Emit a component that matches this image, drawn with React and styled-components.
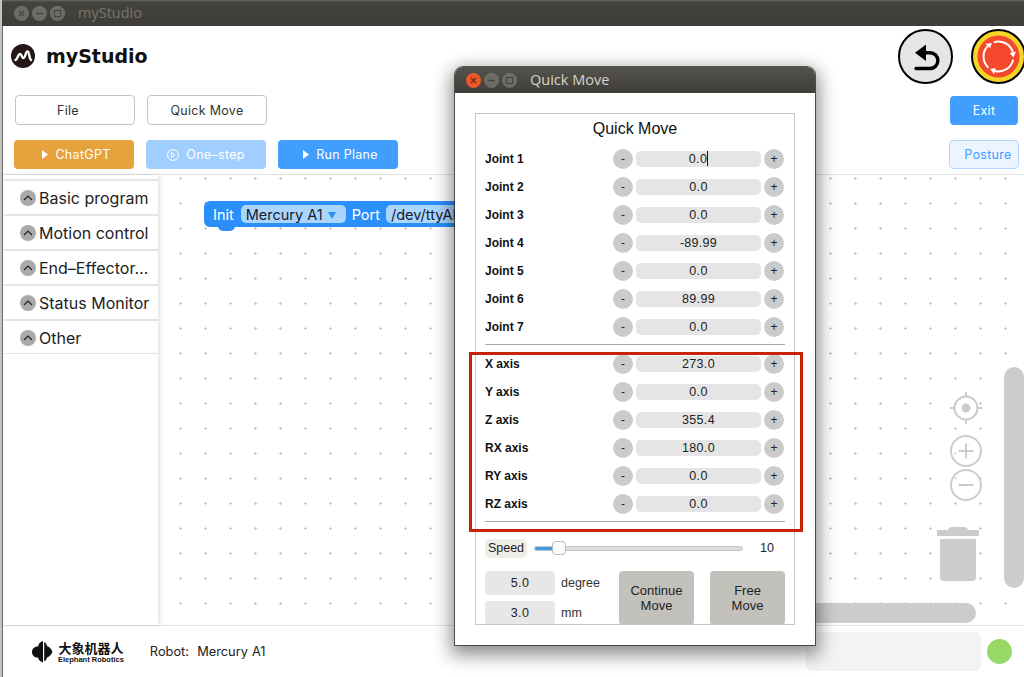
import React from 'react'
import styled, { createGlobalStyle } from 'styled-components'

const Global = createGlobalStyle`
  html, body { margin: 0; padding: 0; background: #fff; }
  body { font-family: "Noto Sans", "Liberation Sans", sans-serif; overflow: hidden; }
  * { box-sizing: border-box; }
`

const uiFont = `Inter, "Noto Sans CJK SC", sans-serif`
const formFont = `"Liberation Sans", Arial, sans-serif`

const Page = styled.div`
  position: relative;
  width: 1024px;
  height: 677px;
  overflow: hidden;
  display: flex;
  flex-direction: column;
  background: #fff;
  border-left: 2px solid #c4c4c4;
`

// sliver of the desktop and the window behind, seen along the left edge
const DesktopEdge = styled.div`
  position: absolute;
  left: -2px;
  top: 26px;
  bottom: 0;
  width: 3px;
  border-right: 1px solid #6a6a6a;
  z-index: 2;
  background: linear-gradient(
    #bdbdbd 342px, #333 342px, #333 355px, #bdbdbd 355px,
    #bdbdbd 390px, #333 390px, #333 408px, #bdbdbd 408px,
    #bdbdbd 436px, #333 436px, #333 444px, #bdbdbd 444px,
    #bdbdbd 454px, #333 454px, #333 461px, #bdbdbd 461px,
    #bdbdbd 472px, #333 472px, #333 479px, #bdbdbd 479px
  );
`

const TitleBar = styled.div`
  height: 26px;
  flex: none;
  margin-left: -2px;
  display: flex;
  align-items: center;
  gap: 3px;
  padding-left: 14px;
  background: linear-gradient(#6a6862, #45433e 2px, #3f3d38);
`

const WinDot = styled.span`
  width: 15px;
  height: 15px;
  border-radius: 50%;
  display: inline-flex;
  align-items: center;
  justify-content: center;
  background: ${p => p.$bg || '#6d6b65'};
  color: ${p => p.$fg || '#45433e'};
  box-shadow: inset 0 1px 1px rgba(255, 255, 255, .08);
  flex: none;
`

const TitleText = styled.span`
  margin-left: ${p => p.$gap}px;
  margin-top: -1px;
  font: 14.5px "Open Sans", sans-serif;
  color: ${p => p.$active ? '#d8d4c8' : '#77756d'};
`

const Header = styled.div`
  height: 149px;
  flex: none;
  display: flex;
  justify-content: space-between;
  border-bottom: 1px solid #e2e2e2;
  padding: 18px 0 5px 12px;
`

const LeftHead = styled.div`
  display: flex;
  flex-direction: column;
`

const Brand = styled.div`
  display: flex;
  align-items: center;
  gap: 11px;
  height: 24px;
  font: bold 19px "DejaVu Sans", sans-serif;
  color: #111;
  margin-left: -3px;
`

const ButtonRow = styled.div`
  display: flex;
  gap: 12px;
  margin-top: ${p => p.$top}px;
  margin-left: ${p => p.$left || 0}px;
`

const Btn = styled.div`
  flex: none;
  width: ${p => p.$w || 120}px;
  height: ${p => p.$h || 29}px;
  margin-top: ${p => p.$mt || 0}px;
  margin-right: ${p => p.$mr || 0}px;
  padding: 0 ${p => p.$pr || 0}px 0 ${p => p.$pl || 0}px;
  border-radius: 4px;
  display: flex;
  align-items: center;
  justify-content: center;
  gap: 7px;
  font: 12.5px ${uiFont};
  letter-spacing: .3px;
  color: ${p => p.$fg || '#fff'};
  background: ${p => p.$bg || '#fff'};
  border: 1px solid ${p => p.$line || 'transparent'};
`

const RightHead = styled.div`
  display: flex;
  flex-direction: column;
  align-items: flex-end;
  padding-right: 5px;
`

const RoundRow = styled.div`
  display: flex;
  gap: 18px;
  margin-top: -15px;
  margin-right: -7px;
  flex: none;
`

const RoundBtn = styled.div`
  width: 55px;
  height: 55px;
  border-radius: 50%;
  border: 2px solid #000;
  background: ${p => p.$bg};
  display: flex;
  align-items: center;
  justify-content: center;
  flex: none;
`

const Main = styled.div`
  position: relative;
  flex: 1;
  min-height: 0;
  display: flex;
`

const Sidebar = styled.div`
  width: 156px;
  flex: none;
  padding: 4px 0 0 2px;
  background: #fff;
  box-shadow: 2px 0 4px rgba(0, 0, 0, .12);
  z-index: 1;
`

const Category = styled.div`
  height: 35px;
  display: flex;
  align-items: center;
  gap: 3px;
  padding-left: 16px;
  border-top: 2px solid #e4e4e4;
  font: 16px ${uiFont};
  color: #222;
  white-space: nowrap;
  &:last-child { border-bottom: 1px solid #e4e4e4; padding-top: 1px; }
`

const Chevron = styled.span`
  width: 16px;
  height: 16px;
  border-radius: 50%;
  background: #aaa;
  display: flex;
  align-items: center;
  justify-content: center;
  flex: none;
`

const Canvas = styled.div`
  position: relative;
  flex: 1;
  overflow: hidden;
`

const Dots = styled.svg`
  position: absolute;
  inset: 0;
  width: 100%;
  height: 100%;
`

const Block = styled.div`
  position: absolute;
  left: 46px;
  top: 26px;
  width: 300px;
  height: 26px;
  border-radius: 6px 0 0 6px;
  background: #2b8ffb;
  display: flex;
  align-items: center;
  gap: 6px;
  padding-left: 9px;
  font: 14.5px ${uiFont};
  color: #fff;
  white-space: nowrap;
  &::after {
    content: '';
    position: absolute;
    left: 14px;
    bottom: -4px;
    width: 17px;
    height: 5px;
    border-radius: 0 0 8px 8px;
    background: #2b8ffb;
  }
`

const Field = styled.span`
  height: 18px;
  margin-left: ${p => p.$ml || 0}px;
  padding: 0 ${p => p.$pr || 5}px 0 5px;
  border-radius: 5px;
  background: #aad5fd;
  color: #14202c;
  display: flex;
  align-items: center;
  gap: 5px;
`

const Caret = styled.span`
  width: 0;
  height: 0;
  margin-top: 2px;
  border-left: 4.5px solid transparent;
  border-right: 4.5px solid transparent;
  border-top: 7px solid #2b8ffb;
`

const CanvasIcon = styled.svg`
  position: absolute;
  left: ${p => p.$x}px;
  top: ${p => p.$y}px;
`

const VScroll = styled.div`
  position: absolute;
  right: 0;
  top: 192px;
  width: 20px;
  height: 221px;
  border-radius: 10px;
  background: #ccc;
`

const HScroll = styled.div`
  position: absolute;
  left: 400px;
  right: 48px;
  bottom: 2px;
  height: 20px;
  border-radius: 10px;
  background: #ccc;
`

const Footer = styled.div`
  height: 52px;
  flex: none;
  border-top: 1px solid #e2e2e2;
  display: flex;
  align-items: center;
  padding-left: 29px;
`

const Logo = styled.div`
  display: flex;
  align-items: center;
  gap: 5px;
`

const LogoText = styled.div`
  display: flex;
  flex-direction: column;
  align-items: center;
  color: #111;
`

const LogoCn = styled.span`
  font: bold 13px/15px "Noto Sans CJK SC", sans-serif;
`

const LogoEn = styled.span`
  font: bold 7.5px/9px "Liberation Sans", sans-serif;
`

const RobotText = styled.span`
  margin-left: 26px;
  font: 12.8px ${uiFont};
  color: #222;
  word-spacing: .5px;
`

const Status = styled.div`
  margin-left: auto;
  display: flex;
  align-items: center;
  gap: 6px;
  padding-right: 12px;
`

const StatusBox = styled.div`
  width: 175px;
  height: 39px;
  border-radius: 6px;
  background: #f3f3f3;
`

const Led = styled.span`
  width: 25px;
  height: 25px;
  border-radius: 50%;
  background: #98d866;
`

const Dialog = styled.div`
  position: absolute;
  left: 453px;
  top: 67px;
  width: 360px;
  height: 578px;
  background: #fff;
  border-radius: 8px 8px 0 0;
  box-shadow: 0 0 0 1px rgba(40, 40, 40, .75), 0 6px 18px 4px rgba(0, 0, 0, .45);
  display: flex;
  flex-direction: column;
  z-index: 3;
`

const DialogBar = styled.div`
  height: 26px;
  flex: none;
  display: flex;
  align-items: center;
  gap: 3px;
  padding-left: 11px;
  border-radius: 8px 8px 0 0;
  background: linear-gradient(#55534d, #3f3d38);
`

const Panel = styled.div`
  margin: 20px 0 0 20px;
  width: 320px;
  height: 512px;
  border: 1px solid #c6c6c6;
  display: flex;
  flex-direction: column;
  padding: 0 9px;
  overflow: hidden;
  font-family: ${formFont};
`

const PanelTitle = styled.div`
  height: 31px;
  flex: none;
  text-align: center;
  font-size: 16px;
  line-height: 29px;
  color: #111;
`

const AxisRow = styled.div`
  height: 28px;
  flex: none;
  display: flex;
  align-items: center;
  padding-right: 1px;
`

const AxisLabel = styled.span`
  flex: 1;
  font-size: 12px;
  font-weight: bold;
  color: #111;
`

const StepBtn = styled.span`
  width: 20px;
  height: 20px;
  border-radius: 50%;
  background: #cbcbcb;
  font-size: 12px;
  display: flex;
  align-items: center;
  justify-content: center;
  color: #222;
  flex: none;
`

const AxisInput = styled.div`
  position: relative;
  width: 125px;
  height: 16px;
  margin: 0 3px;
  border-radius: 5px;
  background: #e5e5e5;
  font-size: 12.5px;
  line-height: 16px;
  text-align: center;
  letter-spacing: .3px;
  color: #222;
`

const Cursor = styled.span`
  display: inline-block;
  width: 1px;
  height: 15px;
  vertical-align: -3px;
  background: #111;
`

const Rule = styled.div`
  height: 1px;
  flex: none;
  background: #aaa;
  margin: ${p => p.$m};
`

const SpeedRow = styled.div`
  height: 20px;
  flex: none;
  margin-top: 16px;
  display: flex;
  align-items: center;
  font-size: 12.5px;
  color: #222;
`

const SpeedTag = styled.span`
  width: 42px;
  height: 19px;
  border-radius: 5px;
  background: #efeee6;
  display: flex;
  align-items: center;
  justify-content: center;
`

const Track = styled.div`
  position: relative;
  width: 209px;
  height: 5px;
  margin-left: 7px;
  border-radius: 3px;
  background: #dcdcdc;
  border: 1px solid #c4c4c4;
`

const TrackFill = styled.div`
  height: 100%;
  border-radius: 3px 0 0 3px;
  background: #3d9be0;
`

const Thumb = styled.span`
  position: absolute;
  top: -6px;
  left: ${p => p.$left}px;
  width: 14px;
  height: 14px;
  border-radius: 4px;
  background: #fafafa;
  border: 1px solid #bbb;
`

const SpeedValue = styled.span`
  margin-left: 17px;
`

const Bottom = styled.div`
  flex: none;
  margin-top: 13px;
  display: flex;
`

const StepCol = styled.div`
  width: 134px;
  display: flex;
  flex-direction: column;
  gap: 6px;
`

const StepRow = styled.div`
  display: flex;
  align-items: center;
  gap: 6px;
  font-size: 12.5px;
  color: #333;
`

const StepInput = styled.span`
  width: 70px;
  height: 24px;
  border-radius: 4px;
  background: #e7e7e7;
  display: flex;
  align-items: center;
  justify-content: center;
  letter-spacing: .3px;
  color: #222;
`

const MoveBtn = styled.div`
  width: 75px;
  height: 54px;
  margin-right: ${p => p.$mr || 0}px;
  border-radius: 4px;
  background: #c2c1bb;
  display: flex;
  align-items: center;
  justify-content: center;
  text-align: center;
  font-size: 13px;
  line-height: 15px;
  color: #222;
`

const Annotation = styled.div`
  position: absolute;
  left: 467px;
  top: 352px;
  width: 334px;
  height: 180px;
  border: 3px solid #c8240c;
  z-index: 4;
`

const joints = [
  ['Joint 1', '0.0'], ['Joint 2', '0.0'], ['Joint 3', '0.0'], ['Joint 4', '-89.99'],
  ['Joint 5', '0.0'], ['Joint 6', '89.99'], ['Joint 7', '0.0'],
]
const axes = [
  ['X axis', '273.0'], ['Y axis', '0.0'], ['Z axis', '355.4'],
  ['RX axis', '180.0'], ['RY axis', '0.0'], ['RZ axis', '0.0'],
]
const categories = ['Basic program', 'Motion control', 'End\u2013Effector\u2026', 'Status Monitor', 'Other']

// three clockwise arrows of the reset button, heads 120 degrees apart
const polar = (deg, r) => {
  const a = deg * Math.PI / 180
  return [23.5 + r * Math.cos(a), 23.5 + r * Math.sin(a)]
}
const resetArrows = [-16, 104, 224].map(end => {
  const [sx, sy] = polar(end - 92, 15)
  const [ex, ey] = polar(end, 15)
  const [ox, oy] = polar(end, 18.2)
  const [ix, iy] = polar(end, 11.8)
  const [tx, ty] = polar(end + 20, 15)
  return {
    arc: `M${sx} ${sy}A15 15 0 0 1 ${ex} ${ey}`,
    head: `M${ox} ${oy}L${ix} ${iy}L${tx} ${ty}z`,
  }
})

const Tri = () => (
  <svg width="6" height="9" viewBox="0 0 6 9"><path d="M0 0l6 4.5L0 9z" fill="#fff" /></svg>
)

const WindowDots = ({ active }) => (
  <>
    <WinDot $bg={active ? '#e9572b' : '#6d6b65'} $fg={active ? '#7a2a10' : '#45433e'}>
      <svg width="7" height="7" viewBox="0 0 7 7"><path d="M1 1l5 5M6 1L1 6" stroke="currentColor" strokeWidth="1.2" /></svg>
    </WinDot>
    <WinDot>
      <svg width="7" height="7" viewBox="0 0 7 7"><path d="M0 3.5h7" stroke="currentColor" strokeWidth="1.4" /></svg>
    </WinDot>
    <WinDot>
      <svg width="7" height="7" viewBox="0 0 7 7"><rect x=".5" y=".5" width="6" height="6" fill="none" stroke="currentColor" /></svg>
    </WinDot>
  </>
)

const Axis = ({ label, value, cursor }) => (
  <AxisRow>
    <AxisLabel>{label}</AxisLabel>
    <StepBtn>-</StepBtn>
    <AxisInput>{value}{cursor && <Cursor />}</AxisInput>
    <StepBtn>+</StepBtn>
  </AxisRow>
)

export default function App() {
  return (
    <Page>
      <Global />
      <DesktopEdge />
      <TitleBar>
        <WindowDots />
        <TitleText $gap={10}>myStudio</TitleText>
      </TitleBar>
      <Header>
        <LeftHead>
          <Brand>
            <svg width="24" height="24" viewBox="0 0 24 24">
              <circle cx="12" cy="12" r="12" fill="#231815" />
              <path d="M4.5 16c2-.5 2.5-6 4.5-6s1.5 4 3.5 4 2-6.5 4-6.5 1.5 7 3.5 8.5" fill="none" stroke="#fff" strokeWidth="2.4" strokeLinecap="round" />
            </svg>
            myStudio
          </Brand>
          <ButtonRow $top={27} $left={1}>
            <Btn $h={30} $line="#c4c4c4" $fg="#333" $pr={14}>File</Btn>
            <Btn $h={30} $line="#c4c4c4" $fg="#333">Quick Move</Btn>
          </ButtonRow>
          <ButtonRow $top={15}>
            <Btn $bg="#e6a23c" $pl={5}><Tri /> ChatGPT</Btn>
            <Btn $bg="#a0cfff">
              <svg width="12" height="12" viewBox="0 0 12 12"><circle cx="6" cy="6" r="5.4" fill="none" stroke="#fff" /><path d="M4.5 3.5l3.5 2.5-3.5 2.5z" fill="none" stroke="#fff" /></svg>
              One&ndash;step
            </Btn>
            <Btn $bg="#409eff" $pl={5}><Tri /> Run Plane</Btn>
          </ButtonRow>
        </LeftHead>
        <RightHead>
          <RoundRow>
            <RoundBtn $bg="#e6e6e6">
              <svg width="30" height="30" viewBox="0 0 30 30">
                <path d="M15 10.7h4a7.9 7.9 0 0 1 0 15.8H5" fill="none" stroke="#000" strokeWidth="3.4" strokeLinecap="round" />
                <path d="M4 10.7L15 2.5v16.5z" fill="#000" />
              </svg>
            </RoundBtn>
            <RoundBtn $bg="#f5d327">
              <svg width="47" height="47" viewBox="0 0 47 47">
                <circle cx="23.5" cy="23.5" r="21" fill="#f4492c" />
                {resetArrows.map(a => (
                  <g key={a.arc}>
                    <path d={a.arc} fill="none" stroke="#fff" strokeWidth="2" />
                    <path d={a.head} fill="#fff" />
                  </g>
                ))}
              </svg>
            </RoundBtn>
          </RoundRow>
          <Btn $bg="#409eff" $w={68} $mt={12} $mr={1}>Exit</Btn>
          <Btn $bg="#ecf5ff" $fg="#409eff" $line="#b3d8ff" $w={70} $mt={15} $pl={8}>Posture</Btn>
        </RightHead>
      </Header>
      <Main>
        <Sidebar>
          {categories.map(c => (
            <Category key={c}>
              <Chevron>
                <svg width="10" height="6" viewBox="0 0 10 6"><path d="M1 5l4-4 4 4" fill="none" stroke="#222" strokeWidth="1.2" /></svg>
              </Chevron>
              {c}
            </Category>
          ))}
        </Sidebar>
        <Canvas>
          <Dots>
            <defs>
              <pattern id="grid" x="20" y="1" width="25" height="25" patternUnits="userSpaceOnUse">
                <path d="M2.5 1v3M1 2.5h3" stroke="#c8c8c8" strokeWidth="1" />
              </pattern>
            </defs>
            <rect width="100%" height="100%" fill="url(#grid)" />
          </Dots>
          <Block>
            Init
            <Field $ml={1} $pr={10}>Mercury A1 <Caret /></Field>
            Port
            <Field>/dev/ttyAMA1</Field>
          </Block>
          <CanvasIcon $x={791} $y={216} width="34" height="34" viewBox="0 0 34 34">
            <circle cx="17" cy="17" r="11.5" fill="none" stroke="#ccc" strokeWidth="2" />
            <circle cx="17" cy="17" r="4.5" fill="#ccc" />
            <path d="M17 1v5M17 28v5M1 17h5M28 17h5" stroke="#ccc" strokeWidth="2" />
          </CanvasIcon>
          <CanvasIcon $x={791} $y={259} width="34" height="34" viewBox="0 0 34 34">
            <circle cx="17" cy="17" r="15" fill="#fff" fillOpacity=".4" stroke="#ccc" strokeWidth="2" />
            <path d="M17 9.5v15M9.5 17h15" stroke="#ccc" strokeWidth="2" />
          </CanvasIcon>
          <CanvasIcon $x={791} $y={293} width="34" height="34" viewBox="0 0 34 34">
            <circle cx="17" cy="17" r="15" fill="#fff" fillOpacity=".4" stroke="#ccc" strokeWidth="2" />
            <path d="M9.5 17h15" stroke="#ccc" strokeWidth="2" />
          </CanvasIcon>
          <CanvasIcon $x={779} $y={352} width="42" height="54" viewBox="0 0 42 54">
            <path d="M0 3h42v6H0zM11 3c1-3 3-3 5-3h10c2 0 4 0 5 3z" fill="#ccc" />
            <path d="M3 12h36v38a4 4 0 0 1-4 4H7a4 4 0 0 1-4-4z" fill="#ccc" />
          </CanvasIcon>
          <VScroll />
          <HScroll />
        </Canvas>
      </Main>
      <Footer>
        <Logo>
          <svg width="22" height="22" viewBox="0 0 22 22">
            <path d="M12 0v21.5c-2.5-.5-4.5-2.5-5-5-3 .5-6-2-6-5.500s3-6 6-5.500C7.500 2.500 9.500.5 12 0zM13.200 1c1.500 1 2.800 2.500 2.800 4 2 .5 4.500 3 5.500 6-1 2.500-3.500 5-5.500 5.500 0 1.500-1.300 3-2.800 4z" fill="#111" />
          </svg>
          <LogoText>
            <LogoCn>大象机器人</LogoCn>
            <LogoEn>Elephant Robotics</LogoEn>
          </LogoText>
        </Logo>
        <RobotText>Robot:&nbsp; Mercury A1</RobotText>
        <Status>
          <StatusBox />
          <Led />
        </Status>
      </Footer>

      <Dialog>
        <DialogBar>
          <WindowDots active />
          <TitleText $active $gap={10}>Quick Move</TitleText>
        </DialogBar>
        <Panel>
          <PanelTitle>Quick Move</PanelTitle>
          {joints.map(([l, v], i) => <Axis key={l} label={l} value={v} cursor={i === 0} />)}
          <Rule $m="3px 0 5px" />
          {axes.map(([l, v]) => <Axis key={l} label={l} value={v} />)}
          <Rule $m="3px 0 0" />
          <SpeedRow>
            <SpeedTag>Speed</SpeedTag>
            <Track>
              <TrackFill style={{ width: '9%' }} />
              <Thumb $left={17} />
            </Track>
            <SpeedValue>10</SpeedValue>
          </SpeedRow>
          <Bottom>
            <StepCol>
              <StepRow><StepInput>5.0</StepInput>degree</StepRow>
              <StepRow><StepInput>3.0</StepInput>mm</StepRow>
            </StepCol>
            <MoveBtn $mr={16}>Continue<br />Move</MoveBtn>
            <MoveBtn>Free<br />Move</MoveBtn>
          </Bottom>
        </Panel>
      </Dialog>
      <Annotation />
    </Page>
  )
}
